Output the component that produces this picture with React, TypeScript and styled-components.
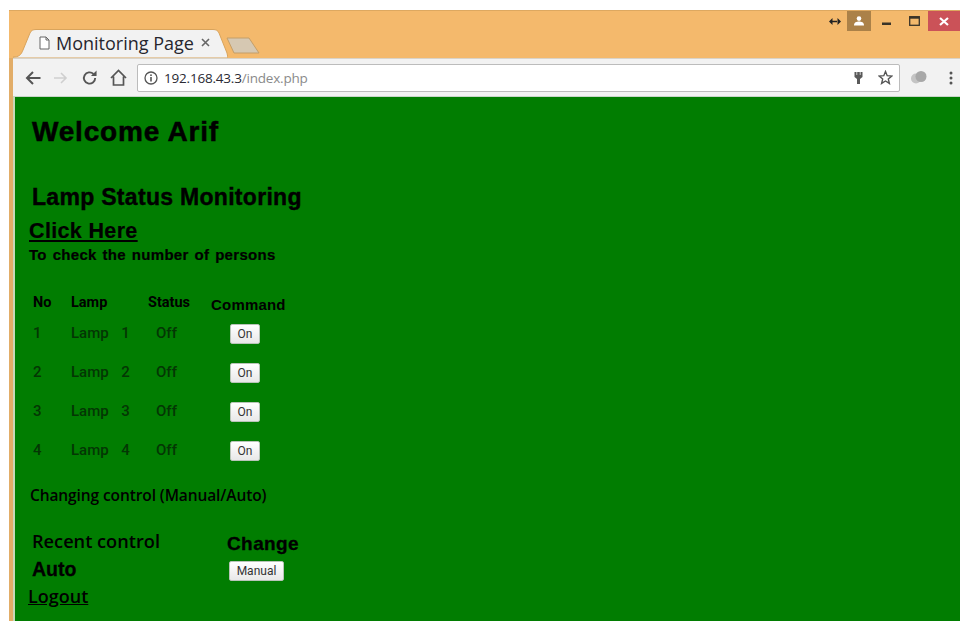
import React from 'react';
import styled, { createGlobalStyle } from 'styled-components';

const GlobalStyle = createGlobalStyle`
  html, body {
    margin: 0;
    padding: 0;
    height: 621px;
    overflow: hidden;
    background: #fff;
  }
`;

const Desktop = styled.div`
  width: 960px;
  height: 621px;
  padding: 10px 0 0 9px;
  box-sizing: border-box;
  background: #fff;
  overflow: hidden;
`;

const Window = styled.div`
  height: 611px;
  display: flex;
  flex-direction: column;
  padding: 0 0 0 4px;
  background: #e2ad68;
  border-top: 1px solid #dda860;
`;

const TitleBar = styled.div`
  height: 47px;
  margin-left: -4px;
  background: #f4b96c;
  display: flex;
  justify-content: space-between;
  align-items: flex-end;
  position: relative;
  flex-shrink: 0;
`;

const TabStrip = styled.div`
  display: flex;
  align-items: flex-end;
  padding-left: 4px;
`;

const Tab = styled.div`
  position: relative;
  width: 215px;
  height: 29px;
  display: flex;
  align-items: center;
  padding: 0 0 2px 26px;
  box-sizing: border-box;
  gap: 6px;
  font-family: "Open Sans", sans-serif;
  font-size: 18px;
  color: #26262e;
`;

const TabShape = styled.svg`
  position: absolute;
  left: 0;
  top: 0;
`;

const TabIcon = styled.svg`
  position: relative;
  flex-shrink: 0;
`;

const TabLabel = styled.span`
  position: relative;
  white-space: nowrap;
`;

const TabClose = styled.svg`
  position: relative;
  margin-left: 1px;
`;

const NewTab = styled.svg`
  margin: 0 0 4px -2px;
`;

const WindowControls = styled.div`
  position: absolute;
  top: 0;
  right: 0;
  height: 20px;
  display: flex;
  align-items: stretch;
`;

const ControlSlot = styled.div<{ $w: number; $bg?: string }>`
  width: ${(p) => p.$w}px;
  background: ${(p) => p.$bg || 'transparent'};
  display: flex;
  align-items: center;
  justify-content: center;
`;

const MinimizeGlyph = styled.svg`
  margin-top: 5px;
`;

const Toolbar = styled.div`
  height: 38px;
  flex-shrink: 0;
  background: #f2f2f2;
  border-top: 1px solid #d9d3c8;
  box-sizing: border-box;
  display: flex;
  align-items: center;
  padding: 0 0 0 12px;
`;

const NavIcon = styled.svg<{ $mr: number }>`
  margin-right: ${(p) => p.$mr}px;
  flex-shrink: 0;
`;

const AddressBar = styled.div`
  flex: 1;
  height: 28px;
  margin: 0 10px 0 0;
  box-sizing: border-box;
  background: #fff;
  border: 1px solid #bcbcbc;
  border-radius: 2px;
  display: flex;
  align-items: center;
  padding: 0 6px;
  font-family: "Open Sans", sans-serif;
  font-size: 13.5px;
  letter-spacing: -0.2px;
`;

const Host = styled.span`
  color: #2a2a33;
  margin-left: 6px;
`;

const Path = styled.span`
  color: #8a8a8a;
  flex: 1;
`;

const BarIcons = styled.div`
  display: flex;
  align-items: center;
  gap: 15px;
`;

const ExtraIcons = styled.div`
  display: flex;
  align-items: center;
  gap: 22px;
  padding-right: 7px;
`;

const Page = styled.main`
  flex: 1;
  background: #017d01;
  color: #000;
  border-top: 1px solid #c9d6c9;
  border-left: 2px solid #c9d8b8;
  font-family: "Liberation Sans", Arial, sans-serif;
  padding: 20px 0 0 14px;
  overflow: hidden;
`;

const Welcome = styled.h1`
  margin: 0 0 0 3px;
  font-size: 28px;
  line-height: 30px;
  font-weight: 700;
  letter-spacing: 0.8px;
  -webkit-text-stroke: 0.5px #000;
`;

const SectionTitle = styled.h2`
  margin: 37px 0 0 3px;
  font-size: 23px;
  line-height: 26px;
  font-weight: 700;
  letter-spacing: 0.3px;
  -webkit-text-stroke: 0.4px #000;
`;

const ClickLink = styled.a`
  display: block;
  margin-top: 9px;
  font-size: 21.5px;
  line-height: 24px;
  font-weight: 700;
  letter-spacing: 0.35px;
  color: #000;
  text-decoration: underline;
  -webkit-text-stroke: 0.2px #000;
`;

const Hint = styled.p`
  margin: 3px 0 0;
  font-size: 15px;
  line-height: 18px;
  font-weight: 700;
  letter-spacing: 0.3px;
  word-spacing: 1.4px;
  -webkit-text-stroke: 0.2px #000;
`;

const LampGrid = styled.div`
  display: grid;
  grid-template-columns: 38px 77px 63px auto;
  grid-auto-rows: 39px;
  margin: 30px 0 0 4px;
  width: 270px;
  font-family: Roboto, sans-serif;
  font-size: 15px;
`;

const HeadRow = styled.div`
  display: contents;
`;

const HeadCell = styled.div`
  font-weight: 700;
  line-height: 18px;
  height: 18px;
  font-size: 14.5px;
`;

const CommandHead = styled(HeadCell)`
  font-family: "Liberation Sans", sans-serif;
  letter-spacing: 0.2px;
  margin-top: 2px;
  white-space: nowrap;
  font-size: 15px;
`;

const Cell = styled.div<{ $pl?: number }>`
  color: #043604;
  font-weight: 500;
  line-height: 18px;
  padding-left: ${(p) => p.$pl || 0}px;
  margin-top: -9px;
  word-spacing: 2.5px;
  white-space: pre;
`;

const CommandCell = styled.div`
  margin-top: -9px;
  padding-left: 19px;
`;

const PageButton = styled.button`
  display: block;
  box-sizing: border-box;
  height: 20px;
  padding: 0;
  background: linear-gradient(#ffffff, #e8e8e8);
  border: 1px solid #b8c4b8;
  border-radius: 2px;
  font-family: Roboto, sans-serif;
  font-size: 12px;
  line-height: 16px;
  color: #333;
`;

const OnButton = styled(PageButton)`
  width: 30px;
`;

const ManualButton = styled(PageButton)`
  width: 55px;
`;

const ControlNote = styled.p`
  margin: -4px 0 0 1px;
  font-family: "Open Sans", sans-serif;
  font-size: 15.5px;
  line-height: 20px;
  font-weight: 600;
  letter-spacing: -0.1px;
`;

const ControlGrid = styled.div`
  display: grid;
  grid-template-columns: 195px auto;
  margin: 24px 0 0 3px;
`;

const RecentLabel = styled.div`
  font-family: "Open Sans", sans-serif;
  font-size: 18.2px;
  line-height: 24px;
  font-weight: 600;
`;

const ChangeLabel = styled.div`
  font-size: 19px;
  line-height: 24px;
  font-weight: 700;
  margin-top: 3px;
  letter-spacing: 0.4px;
  -webkit-text-stroke: 0.3px #000;
`;

const AutoLabel = styled.div`
  font-size: 19.5px;
  line-height: 24px;
  font-weight: 700;
  margin-top: 1px;
  -webkit-text-stroke: 0.3px #000;
`;

const ManualWrap = styled.div`
  padding: 5px 0 0 2px;
`;

const LogoutLink = styled.a`
  display: block;
  margin: 3px 0 0 -1px;
  font-family: "Open Sans", sans-serif;
  font-size: 18px;
  line-height: 24px;
  font-weight: 600;
  color: #000;
  text-decoration: underline;
`;

const lamps = [1, 2, 3, 4];

export default function App() {
  return (
    <>
      <GlobalStyle />
      <Desktop>
        <Window>
          <TitleBar>
            <TabStrip>
              <Tab>
                <TabShape width="215" height="29" viewBox="0 0 215 29">
                  <path d="M0 28 C6 28 8 26 10 21 L17 4 C18 1.5 20 0.5 23 0.5 L200 0.5 C203 0.5 205 1.5 206 4 L214 24 L215 29 L0 29 Z" fill="#f2f2f2" stroke="#d9a45c" strokeWidth="1" />
                </TabShape>
                <TabIcon width="11" height="14" viewBox="0 0 11 14">
                  <path d="M1 1 H7 L10 4 V13 H1 Z M7 1 V4 H10" fill="#fff" stroke="#666" strokeWidth="1" />
                </TabIcon>
                <TabLabel>Monitoring Page</TabLabel>
                <TabClose width="9" height="9" viewBox="0 0 9 9">
                  <path d="M1 1 L8 8 M8 1 L1 8" stroke="#666" strokeWidth="1.6" />
                </TabClose>
              </Tab>
              <NewTab width="34" height="17" viewBox="0 0 34 17">
                <path d="M1 1 H23 L33 16 H8 Z" fill="#d6c8b2" stroke="#c49e68" strokeWidth="1" />
              </NewTab>
            </TabStrip>
            <WindowControls>
              <ControlSlot $w={25}>
                <svg width="12" height="7" viewBox="0 0 12 7">
                  <path d="M0 3.5 L3.5 0 V7 Z M12 3.5 L8.5 0 V7 Z M3 2.7 H9 V4.3 H3 Z" fill="#222" />
                </svg>
              </ControlSlot>
              <ControlSlot $w={24} $bg="#ab8148">
                <svg width="12" height="10" viewBox="0 0 12 10">
                  <circle cx="6" cy="2.6" r="2.3" fill="#fff" />
                  <path d="M1 9.5 C1 6.5 3.5 5.6 6 5.6 C8.5 5.6 11 6.5 11 9.5 Z" fill="#fff" />
                </svg>
              </ControlSlot>
              <ControlSlot $w={30}>
                <MinimizeGlyph width="9" height="3" viewBox="0 0 9 3">
                  <rect width="9" height="2.5" y="0.5" fill="#3a3428" />
                </MinimizeGlyph>
              </ControlSlot>
              <ControlSlot $w={27}>
                <svg width="11" height="10" viewBox="0 0 11 10">
                  <rect x="0.7" y="0.7" width="9.6" height="8.6" fill="none" stroke="#3a3428" strokeWidth="1.3" />
                  <rect x="0.7" y="0.7" width="9.6" height="2" fill="#3a3428" />
                </svg>
              </ControlSlot>
              <ControlSlot $w={32} $bg="#cb5258">
                <svg width="10" height="9" viewBox="0 0 10 9">
                  <path d="M1 1 L9 8 M9 1 L1 8" stroke="#fff" strokeWidth="2.2" />
                </svg>
              </ControlSlot>
            </WindowControls>
          </TitleBar>
          <Toolbar>
            <NavIcon $mr={12} width="16" height="16" viewBox="0 0 16 16">
              <path d="M15.5 8 H2 M8 2 L2 8 L8 14" fill="none" stroke="#555" strokeWidth="2" />
            </NavIcon>
            <NavIcon $mr={14} width="15" height="14" viewBox="0 0 15 14">
              <path d="M1 7 H13 M8 2 L13 7 L8 12" fill="none" stroke="#cfcfcf" strokeWidth="1.6" />
            </NavIcon>
            <NavIcon $mr={12} width="16" height="16" viewBox="0 0 17 16">
              <path d="M14 8 A6 6 0 1 1 12.2 3.7" fill="none" stroke="#555" strokeWidth="2" />
              <path d="M9.5 5.8 H15.5 V0 Z" fill="#555" />
            </NavIcon>
            <NavIcon $mr={10} width="17" height="17" viewBox="0 0 17 17">
              <path d="M1 9 L8.5 1.5 L16 9 M3.5 7.5 V16 H13.5 V7.5" fill="none" stroke="#555" strokeWidth="1.7" />
            </NavIcon>
            <AddressBar>
              <svg width="14" height="14" viewBox="0 0 14 14">
                <circle cx="7" cy="7" r="6" fill="none" stroke="#555" strokeWidth="1.3" />
                <rect x="6.2" y="6" width="1.6" height="4.5" fill="#555" />
                <rect x="6.2" y="3.4" width="1.6" height="1.6" fill="#555" />
              </svg>
              <Host>192.168.43.3</Host>
              <Path>/index.php</Path>
              <BarIcons>
                <svg width="9" height="14" viewBox="0 0 9 14">
                  <path d="M0.5 1 H2.5 V4 H3.2 V1 H5.8 V4 H6.5 V1 H8.5 V6 L6 8 V13 H3 V8 L0.5 6 Z" fill="#5a5a5a" />
                </svg>
                <svg width="15" height="15" viewBox="0 0 15 15">
                  <path d="M7.5 1.5 L9.2 5.7 L13.8 6 L10.3 8.9 L11.4 13.4 L7.5 11 L3.6 13.4 L4.7 8.9 L1.2 6 L5.8 5.7 Z" fill="none" stroke="#555" strokeWidth="1.4" />
                </svg>
              </BarIcons>
            </AddressBar>
            <ExtraIcons>
              <svg width="17" height="15" viewBox="0 0 17 15">
                <circle cx="6" cy="8.5" r="5" fill="#c4c4c4" />
                <circle cx="11" cy="6.5" r="5.5" fill="#a8a8a8" />
              </svg>
              <svg width="4" height="14" viewBox="0 0 4 14">
                <circle cx="2" cy="2" r="1.5" fill="#555" />
                <circle cx="2" cy="7" r="1.5" fill="#555" />
                <circle cx="2" cy="12" r="1.5" fill="#555" />
              </svg>
            </ExtraIcons>
          </Toolbar>
          <Page>
            <Welcome>Welcome Arif</Welcome>
            <SectionTitle>Lamp Status Monitoring</SectionTitle>
            <ClickLink href="#">Click Here</ClickLink>
            <Hint>To check the number of persons</Hint>
            <LampGrid>
              <HeadRow>
                <HeadCell>No</HeadCell>
                <HeadCell>Lamp</HeadCell>
                <HeadCell>Status</HeadCell>
                <CommandHead>Command</CommandHead>
              </HeadRow>
              {lamps.map((n) => (
                <React.Fragment key={n}>
                  <Cell>{n}</Cell>
                  <Cell>{`Lamp  ${n}`}</Cell>
                  <Cell $pl={8}>Off</Cell>
                  <CommandCell>
                    <OnButton>On</OnButton>
                  </CommandCell>
                </React.Fragment>
              ))}
            </LampGrid>
            <ControlNote>Changing control (Manual/Auto)</ControlNote>
            <ControlGrid>
              <RecentLabel>Recent control</RecentLabel>
              <ChangeLabel>Change</ChangeLabel>
              <AutoLabel>Auto</AutoLabel>
              <ManualWrap>
                <ManualButton>Manual</ManualButton>
              </ManualWrap>
            </ControlGrid>
            <LogoutLink href="#">Logout</LogoutLink>
          </Page>
        </Window>
      </Desktop>
    </>
  );
}
